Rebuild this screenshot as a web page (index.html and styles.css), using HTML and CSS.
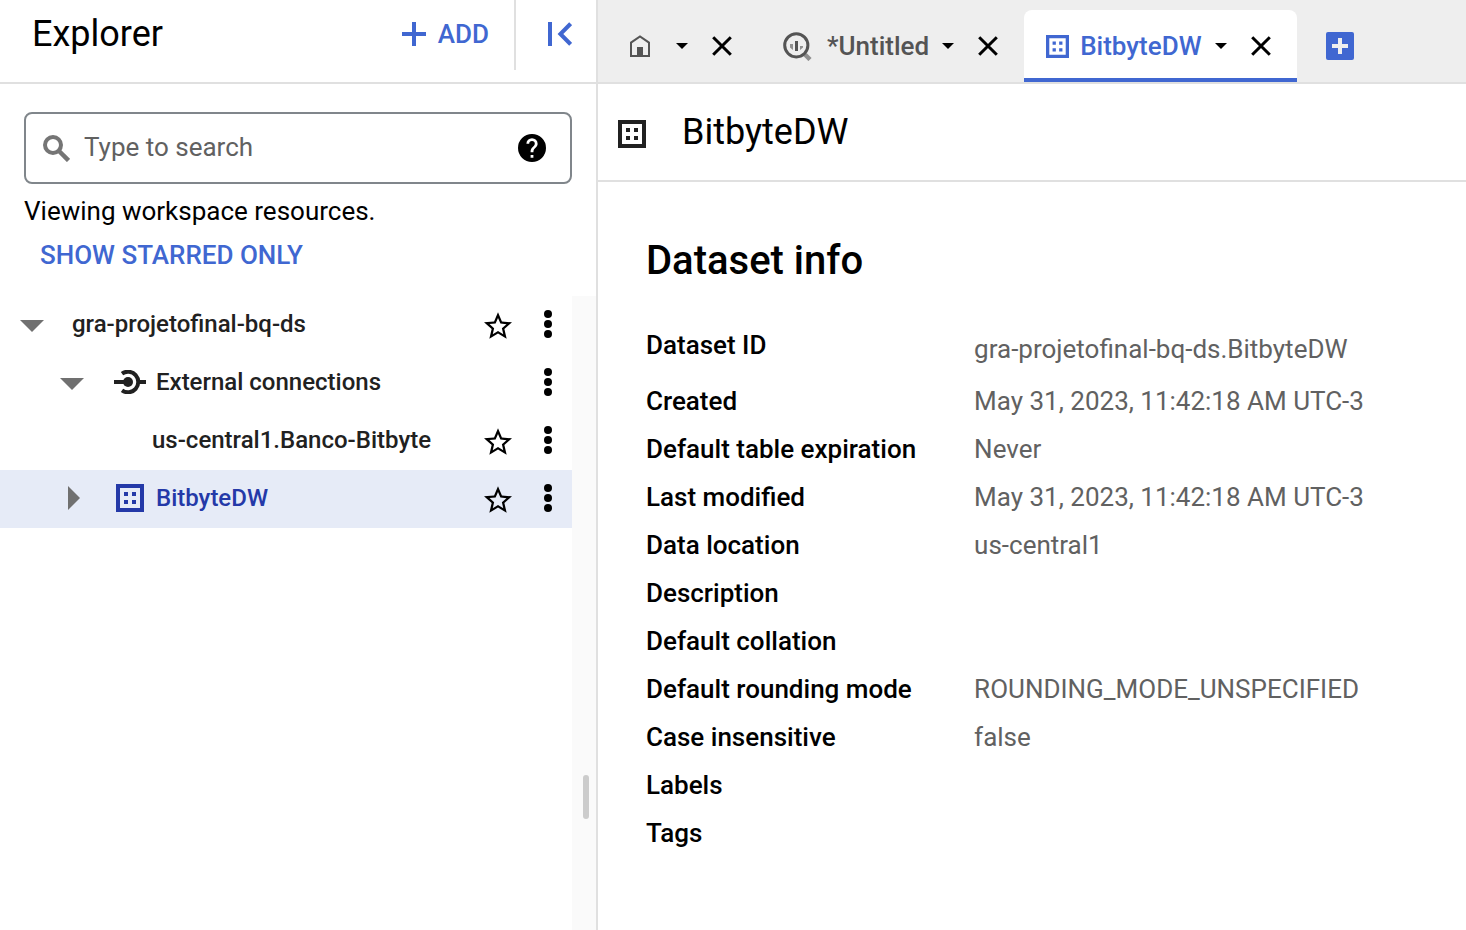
FILE: index.html
```html
<!DOCTYPE html>
<html lang="en">
<head>
<meta charset="utf-8">
<meta name="viewport" content="width=device-width, initial-scale=1">
<title>BitbyteDW</title>
<link rel="stylesheet" href="styles.css">
</head>
<body>
<svg class="sprite" aria-hidden="true">
  <symbol id="dataset" viewBox="0 0 28 28"><path fill-rule="evenodd" d="M0 0h28v28H0zM4 4v20h20V4z"/><path d="M8 8h4v4H8zM16 8h4v4h-4zM8 16h4v4H8zM16 16h4v4h-4z"/></symbol>
  <symbol id="star" viewBox="2 2 20 19"><path d="M22 9.24l-7.19-.62L12 2 9.19 8.63 2 9.24l5.46 4.73L5.82 21 12 17.27 18.18 21l-1.63-7.03zM12 15.4l-3.76 2.27 1-4.28-3.32-2.88 4.38-.38L12 6.1l1.71 4.04 4.38.38-3.32 2.88 1 4.28z"/></symbol>
  <symbol id="more" viewBox="0 0 8 28"><circle cx="4" cy="4" r="4"/><circle cx="4" cy="14" r="4"/><circle cx="4" cy="24" r="4"/></symbol>
  <symbol id="caret" viewBox="0 0 12 6"><path d="M0 0h12L6 6z"/></symbol>
  <symbol id="close" viewBox="0 0 20 20"><path d="M1.2 1.2l17.6 17.6M18.8 1.2L1.2 18.8" stroke="currentColor" stroke-width="3"/></symbol>
  <symbol id="expanded" viewBox="0 0 24 12"><path d="M0 0h24L12 12z"/></symbol>
  <symbol id="collapsed" viewBox="0 0 12 24"><path d="M0 0v24l12-12z"/></symbol>
</svg>

<div class="app">
  <aside class="explorer">
    <header class="explorer-head">
      <h2 class="explorer-title">Explorer</h2>
      <button class="add" type="button">
        <svg width="24" height="24" viewBox="0 0 24 24"><path d="M10 0h4v10h10v4H14v10h-4V14H0v-4h10z"/></svg>
        ADD
      </button>
      <button class="collapse" type="button" aria-label="Collapse panel">
        <svg width="24" height="24" viewBox="0 0 24 24"><path d="M0 0h4v24H0z"/><path d="M22.6 1.7L12.4 12l10.2 10.3" fill="none" stroke="currentColor" stroke-width="4"/></svg>
      </button>
    </header>

    <div class="filters">
      <div class="search">
        <svg class="search-icon" width="27" height="27" viewBox="0 0 27 27"><g fill="none" stroke="currentColor"><circle cx="10" cy="10" r="8" stroke-width="4"/><path d="M15.500 15.500l10 10" stroke-width="4.500"/></g></svg>
        <input class="search-input" type="text" aria-label="Search resources" placeholder="Type to search">
        <button class="help" type="button" aria-label="Search help">
          <svg width="28" height="28" viewBox="2 2 20 20"><path d="M12 2a10 10 0 1 0 0 20 10 10 0 0 0 0-20zm1 17h-2v-2h2zm2.07-7.75l-.9.92C13.45 12.9 13 13.5 13 15h-2v-.5c0-1.1.45-2.1 1.17-2.83l1.24-1.26c.37-.36.59-.86.59-1.41a2 2 0 1 0-4 0H8a4 4 0 1 1 8 0c0 .88-.36 1.68-.93 2.25z"/></svg>
        </button>
      </div>
      <p class="status">Viewing workspace resources.</p>
      <button class="starred" type="button">SHOW STARRED ONLY</button>
    </div>

    <div class="resources">
      <ul class="tree">
        <li class="node level-1">
          <button class="toggle" type="button" aria-label="Collapse project"><svg width="24" height="12"><use href="#expanded"/></svg></button>
          <span class="name">gra-projetofinal-bq-ds</span>
          <button class="action star" type="button" aria-label="Star"><svg width="28" height="27"><use href="#star"/></svg></button>
          <button class="action" type="button" aria-label="More actions"><svg width="8" height="28"><use href="#more"/></svg></button>
        </li>
        <li class="node level-2">
          <button class="toggle" type="button" aria-label="Collapse connections"><svg width="24" height="12"><use href="#expanded"/></svg></button>
          <svg class="kind" width="32" height="24" viewBox="0 0 32 24"><path d="M0 10h14v4H0zM24 10h8v4h-8z"/><circle cx="14" cy="12" r="5"/><path d="M8 3.6A10.3 10.3 0 1 1 8 20.4" fill="none" stroke="currentColor" stroke-width="4"/></svg>
          <span class="name">External connections</span>
          <button class="action" type="button" aria-label="More actions"><svg width="8" height="28"><use href="#more"/></svg></button>
        </li>
        <li class="node level-3">
          <span class="name">us-central1.Banco-Bitbyte</span>
          <button class="action star" type="button" aria-label="Star"><svg width="28" height="27"><use href="#star"/></svg></button>
          <button class="action" type="button" aria-label="More actions"><svg width="8" height="28"><use href="#more"/></svg></button>
        </li>
        <li class="node level-2 selected">
          <button class="toggle closed" type="button" aria-label="Expand dataset"><svg width="12" height="24"><use href="#collapsed"/></svg></button>
          <svg class="kind" width="32" height="28"><use href="#dataset"/></svg>
          <span class="name">BitbyteDW</span>
          <button class="action star" type="button" aria-label="Star"><svg width="28" height="27"><use href="#star"/></svg></button>
          <button class="action" type="button" aria-label="More actions"><svg width="8" height="28"><use href="#more"/></svg></button>
        </li>
      </ul>
      <div class="gutter"><div class="thumb"></div></div>
    </div>
  </aside>

  <main class="workspace">
    <nav class="tabs">
      <div class="tab home">
        <svg width="20" height="22" viewBox="0 0 20 22"><path d="M1 21V7.6L10 1.4l9 6.2V21z" fill="none" stroke="currentColor" stroke-width="2"/><path d="M7 12h6v9H7z"/></svg>
        <button class="menu" type="button" aria-label="Home tab menu"><svg width="12" height="6"><use href="#caret"/></svg></button>
        <button class="close" type="button" aria-label="Close home"><svg width="20" height="20"><use href="#close"/></svg></button>
      </div>
      <div class="tab query">
        <svg width="29" height="29" viewBox="0 0 29 29"><path d="M22 22.5l5 5" stroke="#8f8f8f" stroke-width="4.5"/><circle cx="13.3" cy="13.3" r="11.6" fill="none" stroke="currentColor" stroke-width="3"/><path d="M12 9h3v10h-3z"/><path d="M7 12h3v6l-3-2.500zM17 14h3v1.500L17 18z" fill="#8f8f8f"/></svg>
        <button class="label" type="button">*Untitled</button>
        <button class="menu" type="button" aria-label="Untitled tab menu"><svg width="12" height="6"><use href="#caret"/></svg></button>
        <button class="close" type="button" aria-label="Close untitled"><svg width="20" height="20"><use href="#close"/></svg></button>
      </div>
      <div class="tab active">
        <svg width="23" height="23"><use href="#dataset"/></svg>
        <button class="label" type="button">BitbyteDW</button>
        <button class="menu" type="button" aria-label="BitbyteDW tab menu"><svg width="12" height="6"><use href="#caret"/></svg></button>
        <button class="close" type="button" aria-label="Close BitbyteDW"><svg width="20" height="20"><use href="#close"/></svg></button>
      </div>
      <button class="new-tab" type="button" aria-label="New tab">
        <svg width="28" height="28" viewBox="0 0 28 28"><rect width="28" height="28" rx="2"/><path d="M12 6h4v6h6v4h-6v6h-4v-6H6v-4h6z" fill="#eee"/></svg>
      </button>
    </nav>

    <header class="page-head">
      <svg class="page-icon" width="28" height="28"><use href="#dataset"/></svg>
      <h1 class="page-title">BitbyteDW</h1>
    </header>

    <section class="info">
      <h2 class="info-title">Dataset info</h2>
      <table class="props">
        <tr class="tall"><th scope="row">Dataset ID</th><td>gra-projetofinal-bq-ds.BitbyteDW</td></tr>
        <tr><th scope="row">Created</th><td>May 31, 2023, 11:42:18 AM UTC-3</td></tr>
        <tr><th scope="row">Default table expiration</th><td>Never</td></tr>
        <tr><th scope="row">Last modified</th><td>May 31, 2023, 11:42:18 AM UTC-3</td></tr>
        <tr><th scope="row">Data location</th><td>us-central1</td></tr>
        <tr><th scope="row">Description</th><td></td></tr>
        <tr><th scope="row">Default collation</th><td></td></tr>
        <tr><th scope="row">Default rounding mode</th><td>ROUNDING_MODE_UNSPECIFIED</td></tr>
        <tr><th scope="row">Case insensitive</th><td>false</td></tr>
        <tr><th scope="row">Labels</th><td></td></tr>
        <tr><th scope="row">Tags</th><td></td></tr>
      </table>
    </section>
  </main>
</div>
</body>
</html>
```
FILE: styles.css
```css
:root {
  --blue: #4067d1;
  --line: #e0e0e0;
  --ink: #212121;
}

* { box-sizing: border-box; }

body {
  margin: 0;
  background: #fff;
  color: #000;
  font: 400 26px/32px Roboto, sans-serif;
}

h1, h2, p, ul { margin: 0; padding: 0; }

button {
  padding: 0;
  border: 0;
  background: none;
  color: inherit;
  font: inherit;
  cursor: pointer;
}

svg {
  display: block;
  flex: none;
  fill: currentColor;
}

.sprite {
  position: absolute;
  width: 0;
  height: 0;
}

.app {
  display: flex;
  min-height: 100vh;
}

/* Explorer panel */
.explorer {
  display: flex;
  flex-direction: column;
  flex: 0 0 598px;
  border-right: 2px solid var(--line);
}

.explorer-head {
  display: flex;
  padding: 0 0 12px 32px;
  border-bottom: 2px solid var(--line);
}

.explorer-title {
  flex: 1;
  font-size: 36px;
  font-weight: 400;
  line-height: 68px;
}

.add {
  display: flex;
  align-items: center;
  gap: 12px;
  height: 68px;
  padding-right: 25px;
  color: var(--blue);
  font-weight: 500;
}

.collapse {
  height: 70px;
  padding: 0 24px 2px 32px;
  border-left: 2px solid var(--line);
  color: var(--blue);
}

.filters { padding: 28px 24px 0; }

.search {
  display: flex;
  align-items: center;
  height: 72px;
  padding: 0 24px 0 17px;
  border: 2px solid #80868b;
  border-radius: 8px;
}

.search-icon { color: #757575; }

.search-input {
  flex: 1;
  min-width: 0;
  padding: 0 0 2px 14px;
  border: 0;
  outline: 0;
  background: none;
  font: inherit;
}

.search-input::placeholder {
  color: #616161;
  opacity: 1;
}

.status {
  padding: 11px 0 12px;
}

.starred {
  display: block;
  padding: 0 16px;
  color: var(--blue);
  font-weight: 500;
}

.resources {
  display: flex;
  flex: 1;
  margin-top: 25px;
}

.tree {
  flex: 1;
  list-style: none;
}

.node {
  display: flex;
  align-items: center;
  height: 58px;
  padding: 0 20px 2px 0;
  color: var(--ink);
  font-size: 24px;
  font-weight: 500;
}

.level-1 { padding-left: 20px; }
.level-2 { padding-left: 60px; }
.level-3 { padding-left: 152px; }

.selected {
  background: #e6ebf7;
  color: #2439a8;
}

.toggle {
  display: flex;
  justify-content: center;
  width: 24px;
  padding-top: 3px;
  color: #707070;
}

.closed { padding: 0 0 0 3px; }

.level-1 .name { padding-left: 28px; }
.kind { margin: 0 10px 0 30px; }
.name { flex: 1; }

.action { color: #000; }
.star { padding: 2px 32px 0 0; }

.gutter {
  display: flex;
  flex-direction: column;
  justify-content: flex-end;
  width: 24px;
  padding: 0 7px 111px 11px;
  background: #fafafa;
}

.thumb {
  height: 44px;
  border-radius: 3px;
  background: #ccc;
}

/* Workspace */
.workspace {
  flex: 1;
  min-width: 0;
}

.tabs {
  display: flex;
  padding-top: 10px;
  border-bottom: 2px solid var(--line);
  background: #eee;
}

.tab {
  display: flex;
  align-items: center;
  height: 72px;
  padding: 0 26px 0 22px;
  color: #545454;
}

.home { padding-left: 32px; }
.query { padding-left: 25px; }

.active {
  border-bottom: 4px solid var(--blue);
  border-radius: 8px 8px 0 0;
  padding-top: 4px;
  background: #fff;
  color: var(--blue);
}

.label {
  margin-left: 11px;
  font-weight: 500;
}

.query .label { margin-left: 15px; }

.menu {
  margin: 0 24px 0 13px;
  color: #000;
}

.home .menu { margin-left: 26px; }
.close { color: #000; }

.new-tab {
  margin-left: 29px;
  color: var(--blue);
}

.page-head {
  display: flex;
  align-items: center;
  gap: 36px;
  padding: 24px 20px;
  border-bottom: 2px solid var(--line);
}

.page-icon {
  margin-top: 4px;
  color: var(--ink);
}

.page-title {
  font-size: 36px;
  font-weight: 400;
  line-height: 48px;
}

.info { padding: 55px 48px; }

.info-title {
  font-size: 40px;
  font-weight: 500;
  line-height: 48px;
}

.props {
  margin-top: 36px;
  border-collapse: collapse;
}

.props th,
.props td {
  height: 48px;
  padding: 8px 0;
  text-align: left;
}

.props th {
  min-width: 328px;
  padding-right: 58px;
  font-weight: 500;
  vertical-align: top;
}

.props td { color: #616161; }
.props .tall td { height: 56px; }
```
